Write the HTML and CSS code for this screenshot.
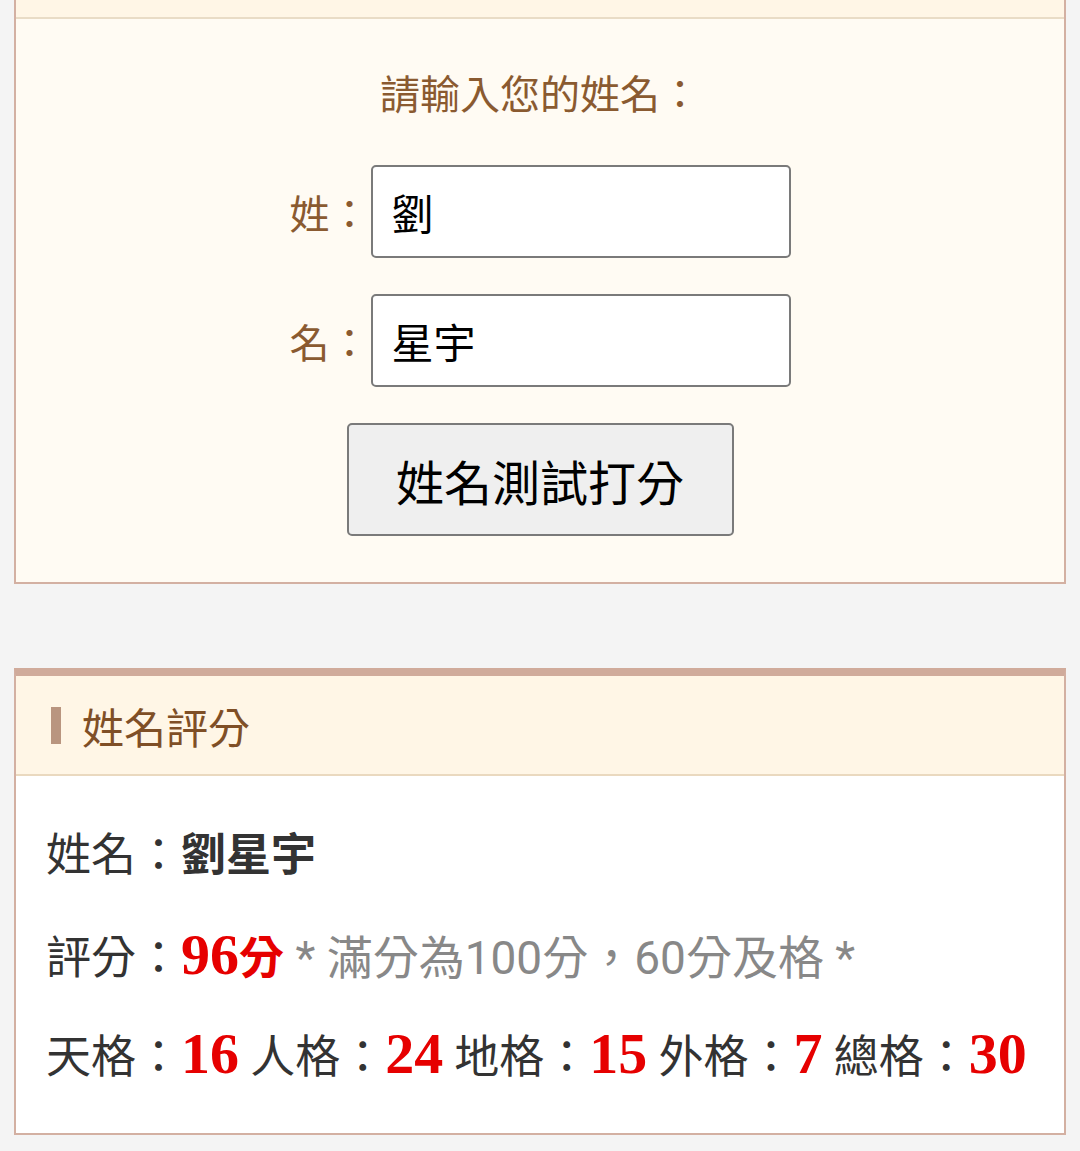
FILE: index.html
```html
<!DOCTYPE html>
<html lang="zh-Hant">
<head>
<meta charset="utf-8">
<title>姓名測試打分</title>
<link rel="stylesheet" href="styles.css">
</head>
<body>
<section class="panel form-panel">
  <div class="panel-head-cut"></div>
  <div class="form-body">
    <div class="form-title">請輸入您的姓名：</div>
    <div class="field">
      <label class="field-label">姓：</label>
      <input class="field-input" type="text" value="劉">
    </div>
    <div class="field">
      <label class="field-label">名：</label>
      <input class="field-input" type="text" value="星宇">
    </div>
    <div class="actions">
      <button class="submit" type="button">姓名測試打分</button>
    </div>
  </div>
</section>

<section class="panel result-panel">
  <div class="result-head">
    <span class="head-bar"></span>
    <h2 class="head-title">姓名評分</h2>
  </div>
  <div class="result-body">
    <div class="line">姓名：<b class="name">劉星宇</b></div>
    <div class="line">評分：<span class="red"><span class="num">96</span><b class="fen">分</b></span><span class="gray"> * 滿分為100分，60分及格 *</span></div>
    <div class="line">天格：<span class="num">16</span> 人格：<span class="num">24</span> 地格：<span class="num">15</span> 外格：<span class="num">7</span> 總格：<span class="num">30</span></div>
  </div>
</section>
</body>
</html>
```

FILE: styles.css
```css
html, body {
  margin: 0;
  padding: 0;
}
body {
  background: #f4f4f4;
  font-family: Roboto, "Noto Sans CJK TC", "Noto Sans", sans-serif;
  color: #333;
  width: 1080px;
  height: 1151px;
  overflow: hidden;
}
.panel {
  margin: 0 14px;
  border: 2px solid #d3b0a2;
}
.form-panel {
  border-top: none;
  background: #fffbf3;
}
.panel-head-cut {
  height: 17px;
  background: #fff6e6;
  border-bottom: 2px solid #e9dcc6;
}
.form-body {
  padding: 48px 0 46px;
  display: flex;
  flex-direction: column;
  align-items: center;
}
.form-title {
  font-size: 40px;
  line-height: 58px;
  color: #8a5a30;
  margin-bottom: 40px;
}
.field {
  display: flex;
  align-items: center;
  margin-bottom: 36px;
}
.field-label {
  width: 81px;
  font-size: 40px;
  color: #8a5a30;
}
.field-input {
  box-sizing: border-box;
  width: 420px;
  height: 93px;
  border: 2px solid #7a7a7a;
  border-radius: 5px;
  background: #fff;
  padding: 0 0 0 19px;
  font-family: Roboto, "Noto Sans CJK TC", sans-serif;
  font-size: 42px;
  color: #000;
  outline: none;
}
.actions {
  display: flex;
  justify-content: center;
}
.submit {
  box-sizing: border-box;
  width: 387px;
  height: 113px;
  background: #efefef;
  border: 2px solid #7a7a7a;
  border-radius: 5px;
  font-family: Roboto, "Noto Sans CJK TC", sans-serif;
  font-size: 48px;
  color: #000;
  padding: 0;
}
.result-panel {
  margin-top: 84px;
  border-top: 8px solid #d0ab9b;
  background: #fff;
}
.result-head {
  height: 98px;
  background: #fff6e6;
  border-bottom: 2px solid #ead9bf;
  display: flex;
  align-items: center;
  padding-left: 35px;
}
.head-bar {
  width: 10px;
  height: 37px;
  background: #b9957f;
  margin-right: 21px;
}
.head-title {
  margin: 0;
  font-weight: normal;
  font-size: 42px;
  color: #7f4f26;
}
.result-body {
  padding: 30px 0 30px 30px;
}
.line {
  font-size: 45px;
  line-height: 99px;
  height: 99px;
  white-space: nowrap;
  color: #333;
}
.name {
  font-weight: bold;
  color: #333;
}
.red {
  color: #e60000;
}
.num {
  font-family: "Liberation Serif", "DejaVu Serif", serif;
  font-weight: bold;
  font-size: 58px;
  color: #e60000;
}
.fen {
  font-weight: bold;
}
.gray {
  color: #888;
  font-size: 46px;
}
```
